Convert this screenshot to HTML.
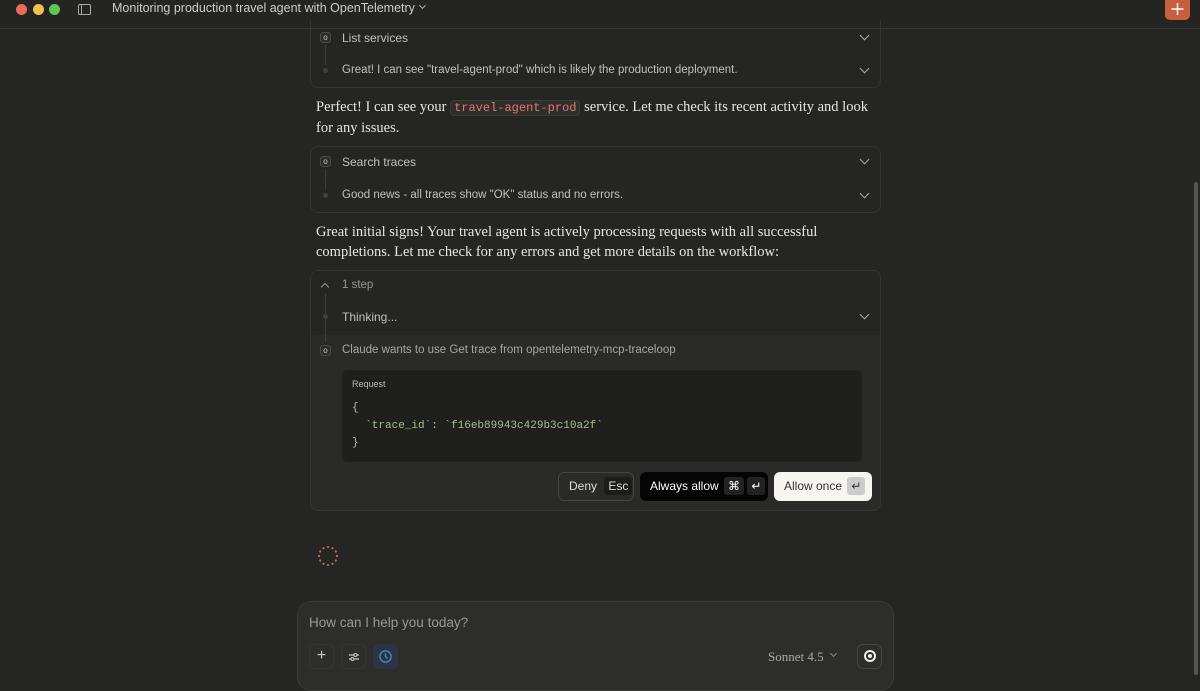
<!DOCTYPE html>
<html><head><meta charset="utf-8"><style>
*{box-sizing:border-box;margin:0;padding:0}
body{width:1200px;height:675px;background:#252523;font-family:"Liberation Sans",sans-serif;color:#c8c6bf;position:relative;overflow:hidden}
.a{position:absolute}
.top{left:0;top:0;width:1200px;height:29px;border-bottom:1px solid #363633;background:#242422}
.dot{width:11px;height:11px;border-radius:50%;top:4px}
.card{border:1px solid #343431;border-radius:8px}
.s{font-size:12px;color:#c2c0b8}
.ic{width:11px;height:11px;border:1px solid #4a4a46;border-radius:3px;font-size:8px;color:#ccc;text-align:center;line-height:9px;background:#2c2c2a}
.chev{width:7px;height:7px;border-right:1.3px solid #aaa;border-bottom:1.3px solid #aaa;transform:rotate(45deg)}
.p{font-family:"Liberation Serif",serif;font-size:14.5px;color:#e8e6df;line-height:19.5px}
code{font-family:"Liberation Mono",monospace;font-size:12px;color:#e27a6b;background:#2e2e2c;border:1px solid #3a3a37;border-radius:4px;padding:0 3px}
.vl{width:1px;background:#3d3d3a}
.sm{width:5px;height:5px;border-radius:50%;background:#3f3f3c}
.btn{border-radius:6px;font-size:12px;height:29px;line-height:29px;white-space:nowrap}
.k{display:inline-block;border-radius:3px;padding:0 4px;height:18px;line-height:18px;vertical-align:middle;margin-top:-2px}
.tb{width:25px;height:25px;border:1px solid #353532;border-radius:6px;top:644px;text-align:center;line-height:22px;color:#ccc;font-size:16px}
</style></head><body>
<div class="a top"></div>
<div class="a dot" style="left:16px;background:#ed6a5e"></div>
<div class="a dot" style="left:33px;background:#f5bf4f"></div>
<div class="a dot" style="left:49px;background:#61c554"></div>
<div class="a" style="left:78px;top:4px;width:13px;height:11px;border:1.3px solid #aaa;border-radius:2px"><div style="width:3px;height:100%;border-right:1.3px solid #aaa"></div></div>
<div class="a" style="left:112px;top:1px;font-size:12.5px;color:#cfcdc6">Monitoring production travel agent with OpenTelemetry</div>
<div class="a chev" style="left:420px;top:3px;width:5px;height:5px"></div>
<div class="a" style="left:1165px;top:-4px;width:25px;height:24px;background:#c95f3f;border-radius:5px"><svg width="25" height="24"><path d="M12.5 7v12M6.5 13h12" stroke="#fff" stroke-width="1.4"/></svg></div>
<div class="a" style="left:1194px;top:182px;width:4px;height:493px;background:#555;border-radius:2px"></div>

<div class="a card" style="left:310px;top:20px;width:571px;height:68px;border-top:none;border-radius:0 0 8px 8px"></div>
<div class="a ic" style="left:320px;top:32px">o</div>
<div class="a s" style="left:342px;top:31px">List services</div>
<div class="a chev" style="left:861px;top:32px"></div>
<div class="a vl" style="left:325px;top:45px;height:20px"></div>
<div class="a sm" style="left:323px;top:68px"></div>
<div class="a s" style="left:342px;top:64px;font-size:11.5px">Great! I can see "travel-agent-prod" which is likely the production deployment.</div>
<div class="a chev" style="left:861px;top:65px"></div>

<div class="a p" style="left:316px;top:98px;width:560px">Perfect! I can see your <code>travel-agent-prod</code> service. Let me check its recent activity and look for any issues.</div>

<div class="a card" style="left:310px;top:146px;width:571px;height:67px"></div>
<div class="a ic" style="left:320px;top:156px">o</div>
<div class="a s" style="left:342px;top:155px">Search traces</div>
<div class="a chev" style="left:861px;top:156px"></div>
<div class="a vl" style="left:325px;top:169px;height:20px"></div>
<div class="a sm" style="left:323px;top:193px"></div>
<div class="a s" style="left:342px;top:189px;font-size:11.5px">Good news - all traces show "OK" status and no errors.</div>
<div class="a chev" style="left:861px;top:190px"></div>

<div class="a p" style="left:316px;top:223px;width:560px">Great initial signs! Your travel agent is actively processing requests with all successful completions. Let me check for any errors and get more details on the workflow:</div>

<div class="a card" style="left:310px;top:270px;width:571px;height:241px;background:#2a2a28;overflow:hidden">
<div style="height:64px;background:#252523"></div></div>
<div class="a" style="left:322px;top:284px;width:6px;height:6px;border-left:1.3px solid #999;border-top:1.3px solid #999;transform:rotate(45deg)"></div>
<div class="a s" style="left:342px;top:279px;color:#9a9891;font-size:11.5px">1 step</div>
<div class="a vl" style="left:325px;top:294px;height:48px"></div>
<div class="a sm" style="left:323px;top:314px"></div>
<div class="a s" style="left:342px;top:310px">Thinking...</div>
<div class="a chev" style="left:861px;top:311px"></div>
<div class="a ic" style="left:320px;top:345px">o</div>
<div class="a s" style="left:342px;top:344px;color:#a8a69f;font-size:11.5px">Claude wants to use Get trace from opentelemetry-mcp-traceloop</div>
<div class="a" style="left:342px;top:370px;width:520px;height:92px;background:#1f1f1d;border-radius:6px"></div>
<div class="a" style="left:352px;top:379px;font-size:9px;color:#bbb">Request</div>
<div class="a" style="left:352px;top:400px;font-family:'Liberation Mono',monospace;font-size:11px;line-height:17.5px;color:#bbb;white-space:pre">{
  <span style="color:#a5c08a">`trace_id`</span>: <span style="color:#a5c08a">`f16eb89943c429b3c10a2f`</span>
}</div>
<div class="a btn" style="left:558px;top:472px;width:76px;border:1px solid #44443f;color:#ddd;padding-left:10px;line-height:27px">Deny <span class="k" style="background:#1c1c1a;margin-left:4px">Esc</span></div>
<div class="a btn" style="left:640px;top:472px;width:128px;background:#050505;color:#fff;padding-left:10px">Always allow <span class="k" style="background:#222;margin-left:2px">⌘</span> <span class="k" style="background:#222">↵</span></div>
<div class="a btn" style="left:774px;top:472px;width:98px;background:#f7f5f0;color:#333;padding-left:10px">Allow once <span class="k" style="background:#ccc;margin-left:2px">↵</span></div>

<svg class="a" style="left:316px;top:544px" width="24" height="24" viewBox="0 0 24 24"><g fill="#c7704f">
<circle cx="12" cy="3" r="1.1"/><circle cx="16.5" cy="4.2" r="1.1"/><circle cx="19.8" cy="7.5" r="1.1"/><circle cx="21" cy="12" r="1.1"/><circle cx="19.8" cy="16.5" r="1.1"/><circle cx="16.5" cy="19.8" r="1.1"/><circle cx="12" cy="21" r="1.1"/><circle cx="7.5" cy="19.8" r="1.1"/><circle cx="4.2" cy="16.5" r="1.1"/><circle cx="3" cy="12" r="1.1"/><circle cx="4.2" cy="7.5" r="1.1"/><circle cx="7.5" cy="4.2" r="1.1"/></g></svg>

<div class="a" style="left:297px;top:601px;width:597px;height:90px;background:#2d2d2b;border:1px solid #3a3a37;border-radius:14px"></div>
<div class="a" style="left:309px;top:615px;font-size:13.5px;color:#9a9891">How can I help you today?</div>
<div class="a tb" style="left:309px">+</div>
<div class="a tb" style="left:341px"><svg width="12" height="12" viewBox="0 0 12 12" style="margin-top:6px"><path d="M1 4h10M1 8h10" stroke="#ccc" stroke-width="1.2"/><circle cx="7.5" cy="4" r="1.5" fill="#2d2d2b" stroke="#ccc"/><circle cx="4.5" cy="8" r="1.5" fill="#2d2d2b" stroke="#ccc"/></svg></div>
<div class="a tb" style="left:373px;background:#2b3644;border-color:#2b3644"><svg width="15" height="15" viewBox="0 0 16 16" style="margin-top:4px"><circle cx="8" cy="8" r="6" fill="none" stroke="#4a86c9" stroke-width="1.4"/><path d="M8 4.5V8l2 2" fill="none" stroke="#4a86c9" stroke-width="1.4"/></svg></div>
<div class="a" style="left:768px;top:649px;font-family:'Liberation Serif',serif;font-size:13px;color:#aaa">Sonnet 4.5</div>
<div class="a chev" style="left:831px;top:651px;width:5px;height:5px;border-color:#888"></div>
<div class="a tb" style="left:857px;border-color:#444"><div style="width:12px;height:12px;border:2px solid #eee;border-radius:50%;margin:5px auto;padding:2px"><div style="width:4px;height:4px;background:#eee;border-radius:50%"></div></div></div>
</body></html>
